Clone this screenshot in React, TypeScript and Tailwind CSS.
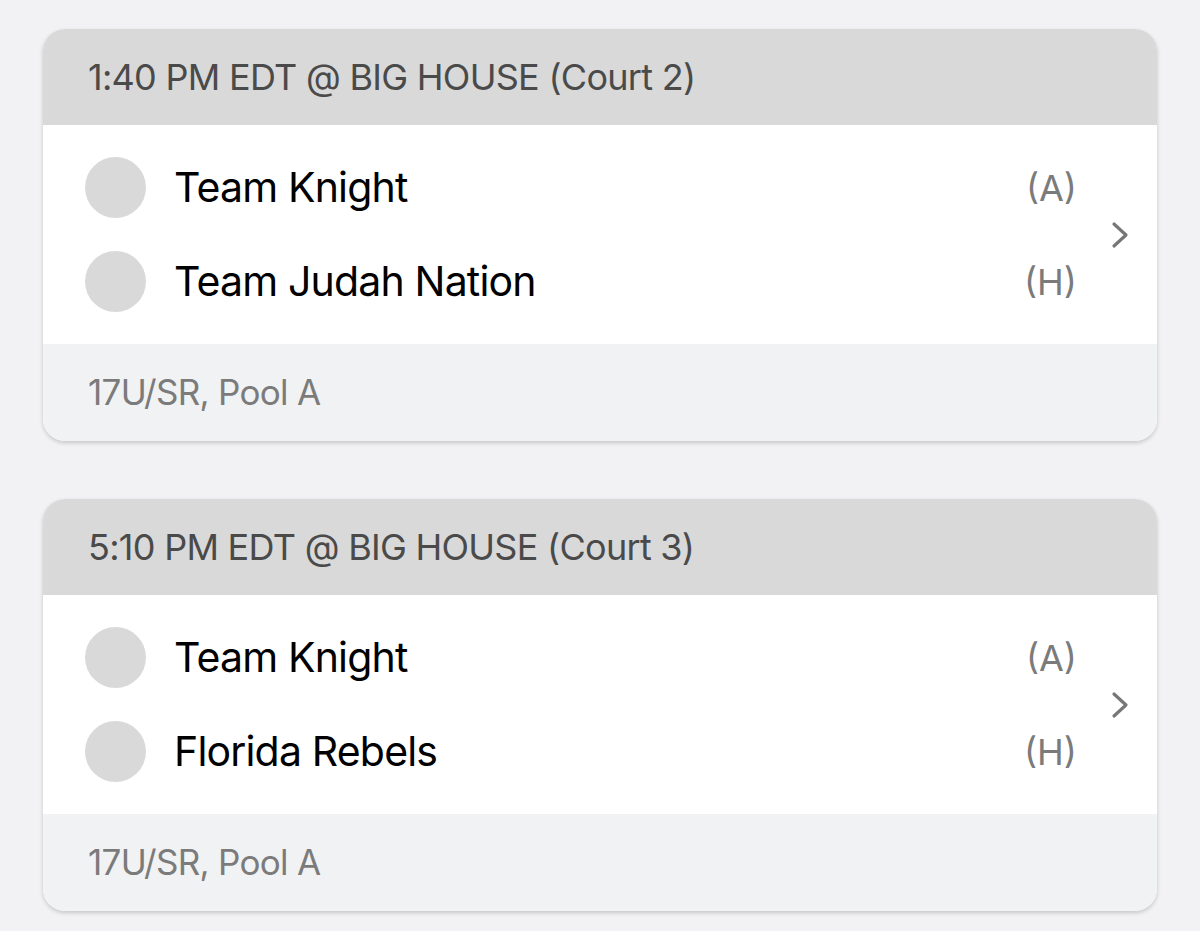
import React from 'react';

interface Game {
    time: string;
    venue: string;
    away: string;
    home: string;
    division: string;
}

const games: Game[] = [
    { time: '1:40 PM EDT', venue: 'BIG HOUSE (Court 2)', away: 'Team Knight', home: 'Team Judah Nation', division: '17U/SR, Pool A' },
    { time: '5:10 PM EDT', venue: 'BIG HOUSE (Court 3)', away: 'Team Knight', home: 'Florida Rebels', division: '17U/SR, Pool A' },
];

const TeamRow: React.FC<{ name: string; side: string }> = ({ name, side }) => (
    <div className="flex items-center h-[61px]">
        <div className="w-[61px] h-[61px] rounded-full bg-[#d9d9d9] shrink-0" />
        <div className="flex-1 ml-[28px] text-[41px] text-black leading-none tracking-[-0.02em]">{name}</div>
        <div className="text-[36px] text-[#7b7b7b] leading-none">{side}</div>
    </div>
);

const GameCard: React.FC<{ game: Game }> = ({ game }) => (
    <div className="rounded-[22px] overflow-hidden bg-white shadow-[0_2px_4px_rgba(0,0,0,0.18)]">
        <div className="h-[96px] bg-[#d9d9d9] flex items-center pl-[45px] text-[36px] text-[#4a4a4a] tracking-[-0.02em]">
            {game.time} @ {game.venue}
        </div>
        <div className="flex items-center">
            <div className="flex-1 pl-[42px] pt-[32px] pb-[32px] flex flex-col gap-[33px]">
                <TeamRow name={game.away} side="(A)" />
                <TeamRow name={game.home} side="(H)" />
            </div>
            <div className="w-[80px] flex justify-end pr-[28px]">
                <svg width="18" height="28" viewBox="0 0 18 28" fill="none">
                    <polyline points="3,3 15,14 3,25" stroke="#777777" strokeWidth="3.2" strokeLinecap="round" strokeLinejoin="round" />
                </svg>
            </div>
        </div>
        <div className="h-[97px] bg-[#f1f2f4] flex items-center pl-[45px] text-[35px] text-[#7b7b7b] tracking-[-0.02em]">
            {game.division}
        </div>
    </div>
);

export default function App() {
    return (
        <div className="min-h-[931px] bg-[#f2f2f4] pt-[29px] pl-[43px] pr-[43px] flex flex-col gap-[58px]" style={{ fontFamily: 'Inter, "Noto Sans", sans-serif' }}>
            {games.map((g, i) => (
                <GameCard key={i} game={g} />
            ))}
        </div>
    );
}
